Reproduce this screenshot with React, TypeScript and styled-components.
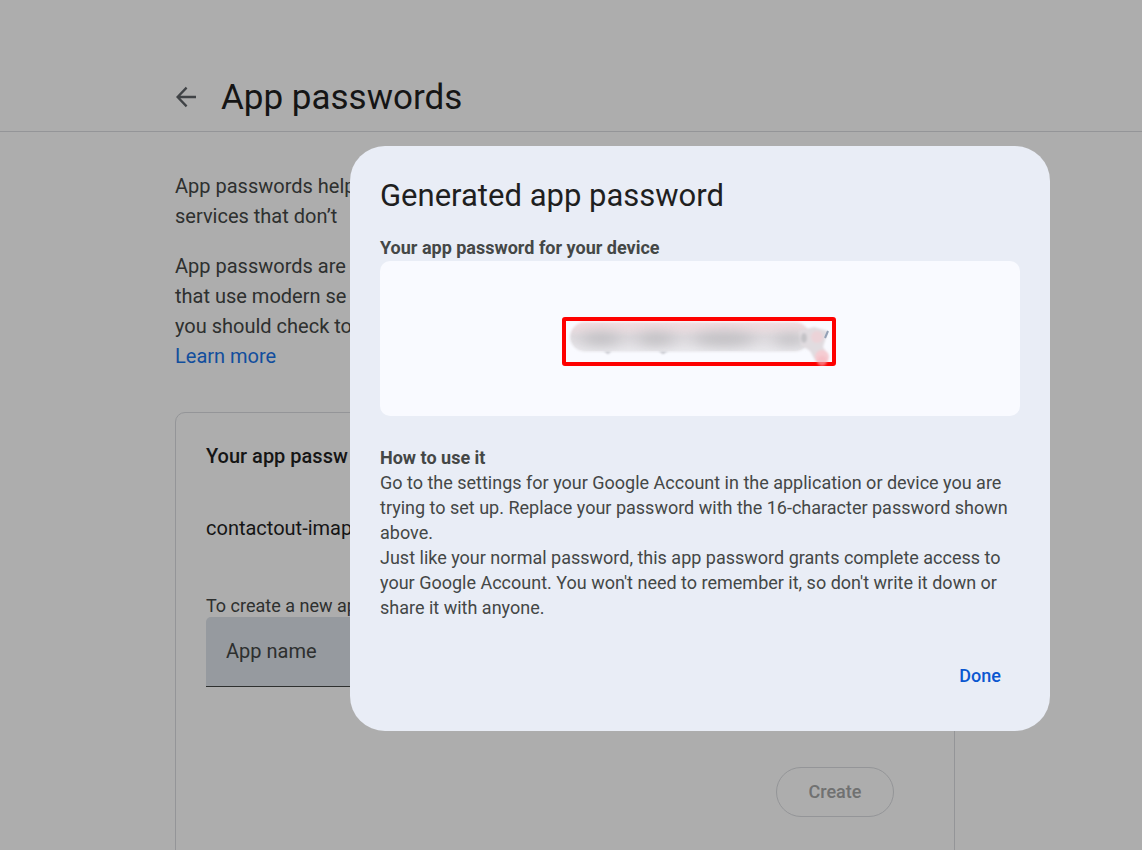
import React from "react";
import styled, { createGlobalStyle } from "styled-components";

const GlobalStyle = createGlobalStyle`
  *, *::before, *::after { box-sizing: border-box; }
  body {
    margin: 0;
    background: #fff;
    font-family: Roboto, "Liberation Sans", sans-serif;
    color: #1f1f1f;
  }
`;

const Page = styled.div`
  height: 100vh;
  overflow: hidden;
`;

const Header = styled.header`
  display: flex;
  align-items: center;
  gap: 24px;
  height: 132px;
  padding: 62px 175px 0;
  border-bottom: 1px solid #dadce0;
`;

const BackButton = styled.button`
  display: flex;
  padding: 0;
  border: 0;
  background: none;
  color: #5f6368;
`;

const PageTitle = styled.h1`
  margin: 0;
  padding-top: 2px;
  font-size: 35px;
  line-height: 44px;
  font-weight: 400;
`;

const Content = styled.main`
  padding: 39px 175px 0;
`;

const Column = styled.div`
  max-width: 780px;
`;

const Paragraph = styled.p`
  margin: 0 0 20px;
  font-size: 20px;
  line-height: 30px;
  color: #444746;
`;

const Link = styled.a`
  display: block;
  color: #1a73e8;
  text-decoration: none;
`;

const Card = styled.section`
  margin-top: 41px;
  padding: 28px 60px 120px 30px;
  border: 1px solid #dadce0;
  border-radius: 10px;
`;

const CardTitle = styled.h2`
  margin: 0;
  font-size: 20px;
  line-height: 30px;
  font-weight: 500;
`;

const AppEntry = styled.p`
  margin: 42px 0 52px;
  font-size: 20px;
  line-height: 30px;
`;

const Form = styled.form`
  display: flex;
  flex-direction: column;
`;

const FieldLabel = styled.label`
  font-size: 18px;
  line-height: 22px;
  color: #444746;
`;

const NameInput = styled.input`
  width: 100%;
  height: 70px;
  padding: 0 20px 2px;
  border: 0;
  border-bottom: 1px solid #444746;
  border-radius: 5px 5px 0 0;
  background: #dde3ea;
  font: 20px Roboto, "Liberation Sans", sans-serif;
  &::placeholder { color: #444746; opacity: 1; }
`;

const CreateButton = styled.button`
  align-self: flex-end;
  width: 118px;
  height: 50px;
  margin-top: 80px;
  padding: 0 0 2px;
  border: 1px solid #dadce0;
  border-radius: 25px;
  background: none;
  color: #a6a7a7;
  font: 500 18px Roboto, "Liberation Sans", sans-serif;
`;

const Backdrop = styled.div`
  position: fixed;
  inset: 0;
  display: flex;
  justify-content: flex-end;
  align-items: flex-start;
  padding: 146px 92px 0;
  background: rgba(0, 0, 0, 0.32);
`;

const Dialog = styled.section`
  width: 100%;
  max-width: 700px;
  padding: 30px 30px 31px;
  border-radius: 35px;
  background: #e9edf6;
  font-size: 18px;
  line-height: 25px;
  color: #444746;
`;

const DialogTitle = styled.h2`
  margin: 0 0 19px;
  font-size: 31px;
  line-height: 40px;
  font-weight: 400;
  color: #1f1f1f;
`;

const Subheading = styled.h3`
  margin: 0;
  font-size: 18px;
  line-height: 25px;
  font-weight: 700;
`;

const DialogText = styled.p`
  margin: 0;
`;

const PasswordPanel = styled.div`
  display: flex;
  justify-content: center;
  align-items: center;
  height: 155px;
  margin: 1px 0 29px;
  padding: 5px 2px 0 0;
  border-radius: 10px;
  background: #f9faff;
`;

const Actions = styled.div`
  display: flex;
  justify-content: flex-end;
  margin-top: 30px;
`;

const DoneButton = styled.button`
  width: 80px;
  height: 50px;
  padding: 0;
  border: 0;
  border-radius: 25px;
  background: none;
  color: #0b57d0;
  font: 500 18px Roboto, "Liberation Sans", sans-serif;
`;

const BackArrow = () => (
  <svg width="22" height="22" viewBox="0 0 22 22" fill="none" stroke="currentColor" strokeWidth="2.3" aria-hidden="true">
    <path d="M21 11H3M11.6 1.6 2.6 11l9 9.4" />
  </svg>
);

const HiddenPassword = () => (
  <svg width="276" height="50" viewBox="0 0 276 50" role="img" aria-label="Hidden password">
    <defs>
      <filter id="edge" x="-20%" y="-30%" width="140%" height="160%">
        <feGaussianBlur stdDeviation="1.3" />
      </filter>
      <filter id="soft" x="-60%" y="-150%" width="220%" height="400%">
        <feGaussianBlur stdDeviation="9 6" />
      </filter>
      <linearGradient id="tint" x1="0" y1="0" x2="0" y2="1">
        <stop offset="0" stopColor="#f3dde1" />
        <stop offset="0.5" stopColor="#dfdce0" />
        <stop offset="1" stopColor="#ebeaee" />
      </linearGradient>
      <clipPath id="smear">
        <rect x="10" y="7" width="238" height="28" rx="14" />
      </clipPath>
    </defs>
    <path d="M42 34h9l-4 4zM97 34h11l-6 4z" fill="#b4b6be" filter="url(#edge)" />
    <rect x="9" y="6" width="240" height="30" rx="15" fill="url(#tint)" filter="url(#edge)" />
    <g clipPath="url(#smear)">
      <g fill="#b9b8bb" opacity="0.75" filter="url(#soft)">
        <ellipse cx="40" cy="23" rx="21" ry="8" />
        <ellipse cx="95" cy="23" rx="20" ry="8" />
        <ellipse cx="163" cy="23" rx="32" ry="8" />
        <ellipse cx="229" cy="24" rx="16" ry="7" />
      </g>
    </g>
    <g filter="url(#edge)">
      <path d="M238 15 253 11 267 15 262 31 268 40 264 47 255 46 249 35 240 29Z" fill="#e1dce0" />
      <circle cx="256" cy="21" r="6" fill="#ecd3d8" />
      <circle cx="261" cy="41" r="7" fill="#f5ccd2" />
      <ellipse cx="243" cy="22" rx="3" ry="5" fill="#c4c3c7" />
    </g>
    <path d="M267 15 264 22" stroke="#93a0b5" strokeWidth="2" fill="none" />
    <rect x="3" y="3" width="270" height="45" rx="1" fill="none" stroke="#fe0000" strokeWidth="4" />
    <circle cx="261" cy="45" r="5" fill="#f5b9c0" opacity="0.6" filter="url(#edge)" />
  </svg>
);

export default function App() {
  return (
    <>
      <GlobalStyle />
      <Page>
        <Header>
          <BackButton type="button" aria-label="Back">
            <BackArrow />
          </BackButton>
          <PageTitle>App passwords</PageTitle>
        </Header>
        <Content>
          <Column>
            <Paragraph>
              App passwords help
              <br />
              services that don’t
            </Paragraph>
            <Paragraph>
              App passwords are
              <br />
              that use modern se
              <br />
              you should check to
              <Link href="#learn-more">Learn more</Link>
            </Paragraph>
            <Card>
              <CardTitle>Your app passw</CardTitle>
              <AppEntry>contactout-imap</AppEntry>
              <Form>
                <FieldLabel htmlFor="app-name">To create a new ap</FieldLabel>
                <NameInput id="app-name" placeholder="App name" />
                <CreateButton type="button" disabled>
                  Create
                </CreateButton>
              </Form>
            </Card>
          </Column>
        </Content>
      </Page>
      <Backdrop>
        <Dialog role="dialog" aria-modal="true" aria-labelledby="dialog-title">
          <DialogTitle id="dialog-title">Generated app password</DialogTitle>
          <Subheading>Your app password for your device</Subheading>
          <PasswordPanel>
            <HiddenPassword />
          </PasswordPanel>
          <Subheading>How to use it</Subheading>
          <DialogText>
            Go to the settings for your Google Account in the application or device you are trying to
            set up. Replace your password with the 16-character password shown above.
          </DialogText>
          <DialogText>
            Just like your normal password, this app password grants complete access to your Google
            Account. You won't need to remember it, so don't write it down or share it with anyone.
          </DialogText>
          <Actions>
            <DoneButton type="button">Done</DoneButton>
          </Actions>
        </Dialog>
      </Backdrop>
    </>
  );
}
